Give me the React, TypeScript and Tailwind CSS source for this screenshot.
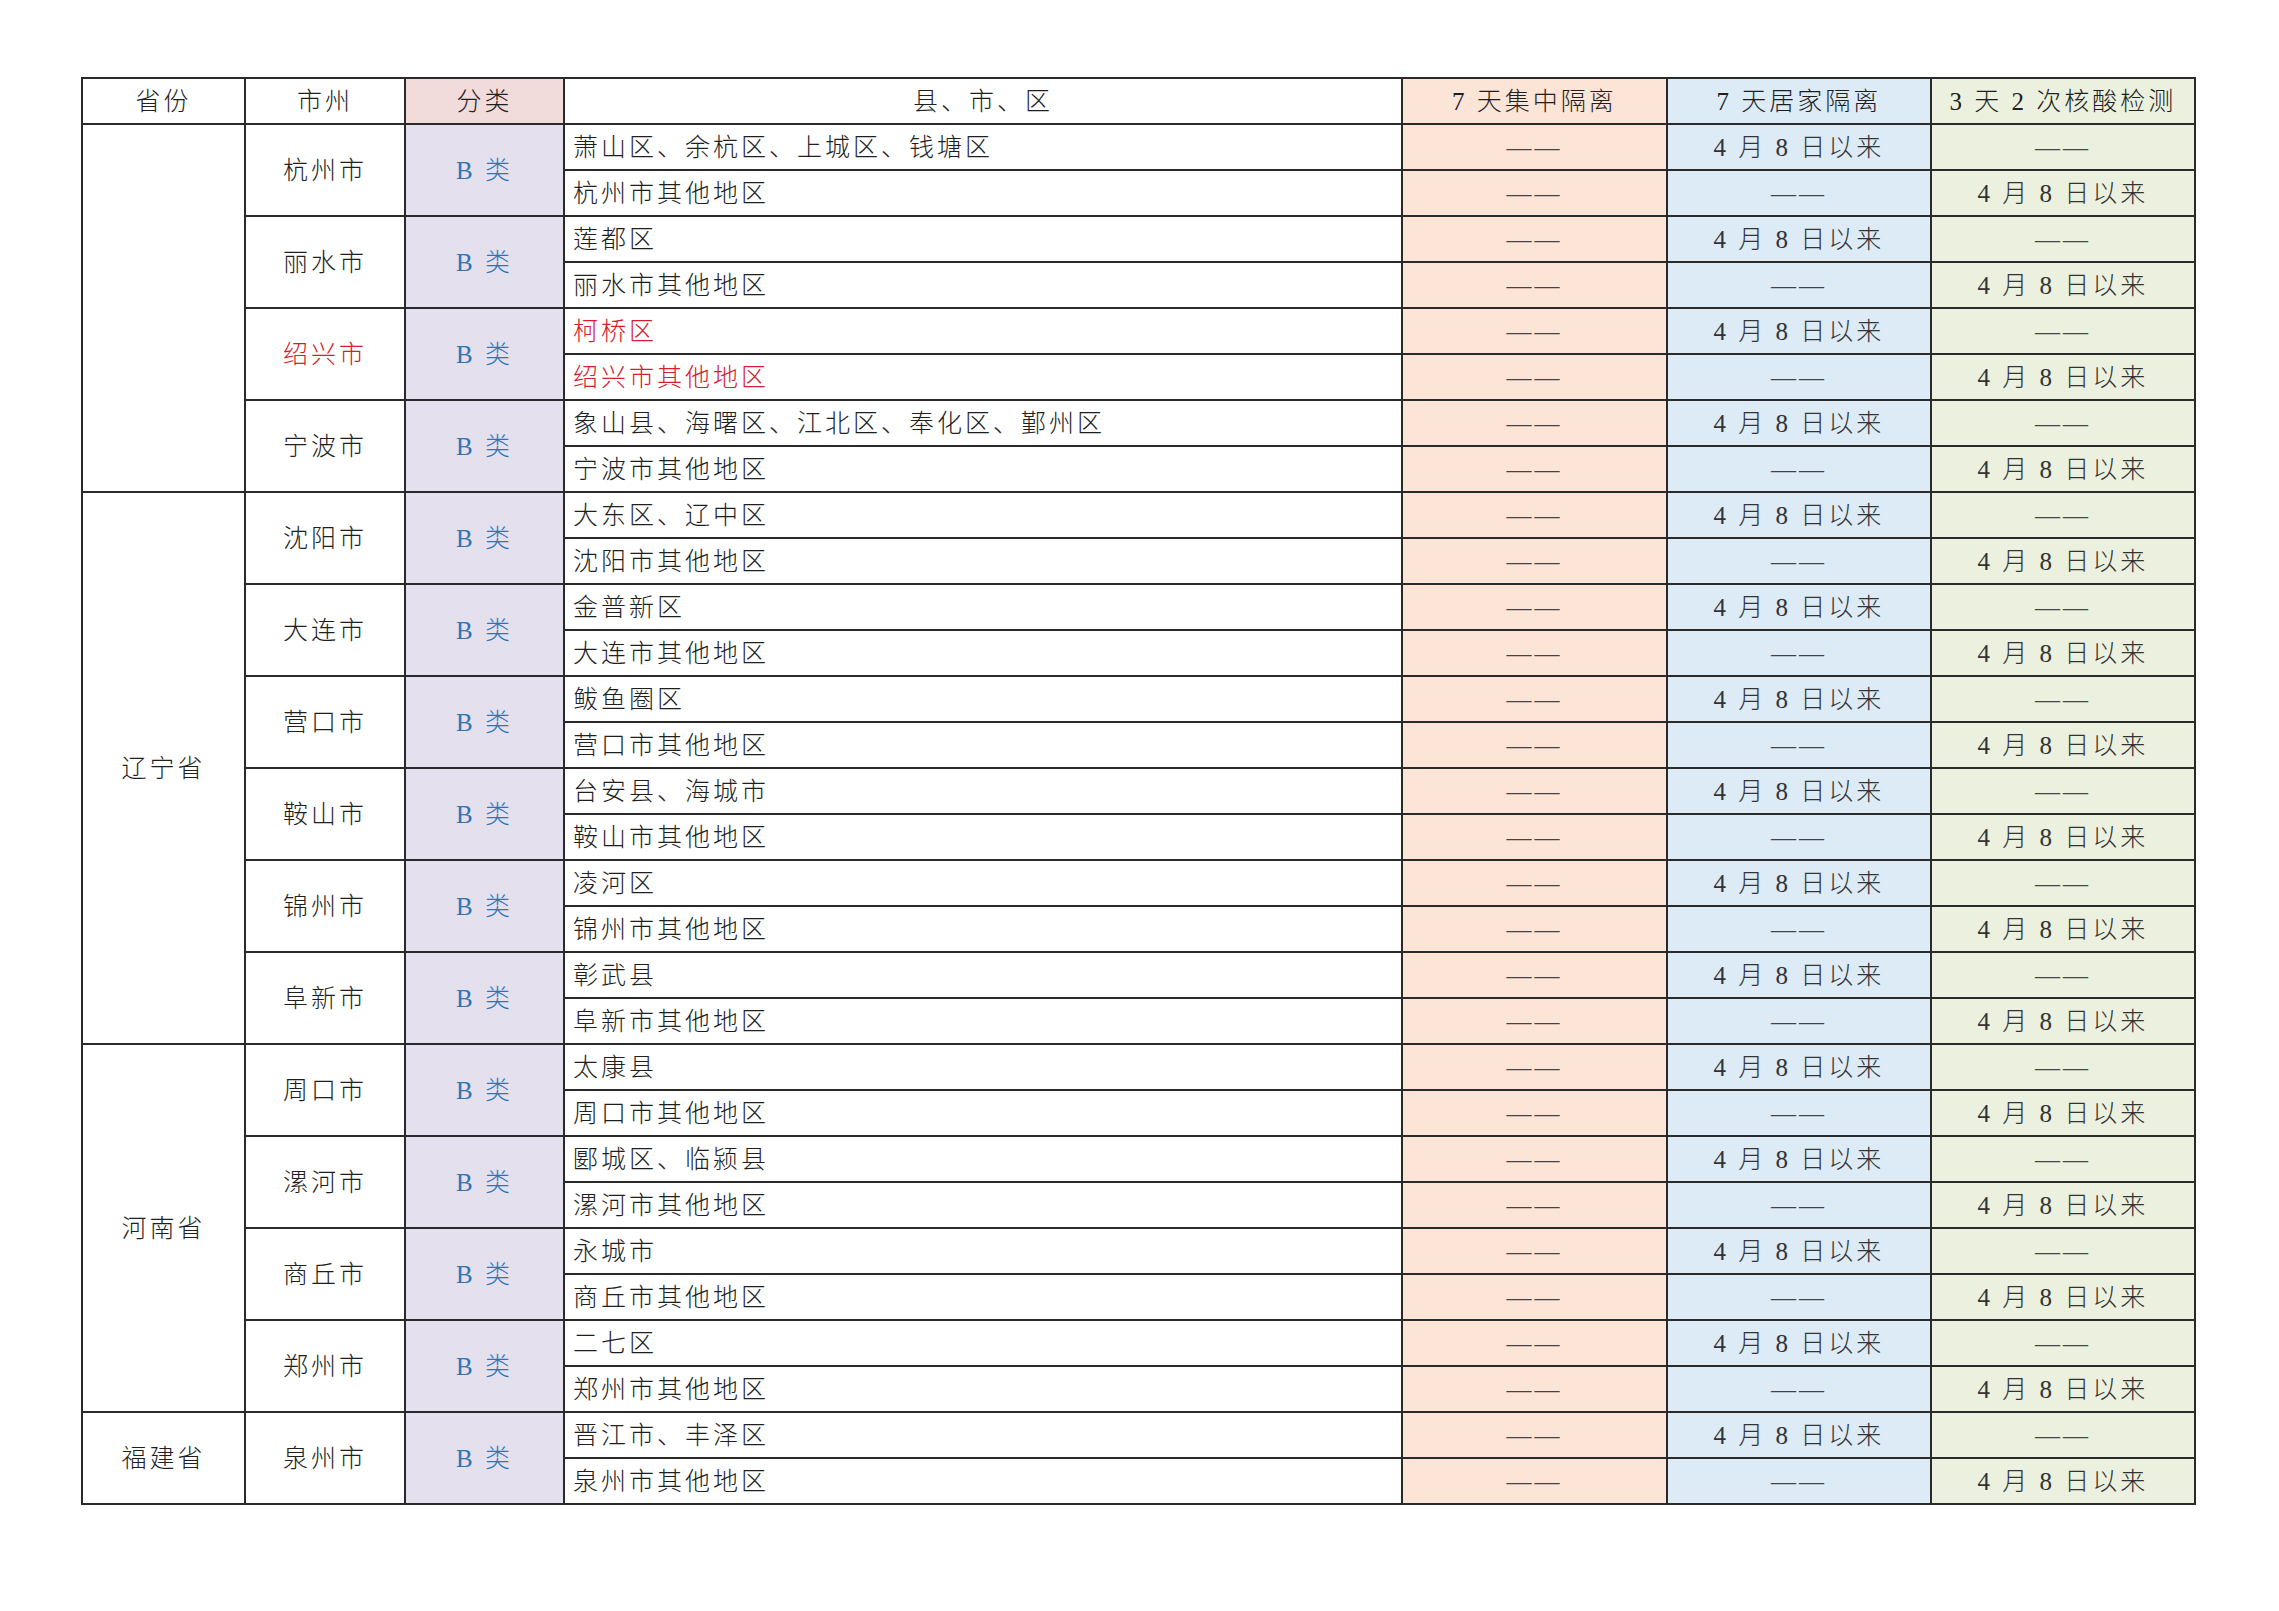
// 疫情防控分类管控区域表
// 省份 / 市州 / 分类 / 县市区 + 三类管控措施

type City = {
  name: string
  red?: boolean
  main: string
}

type Province = {
  name: string
  cities: City[]
}

const provinces: Province[] = [
  {
    name: '',
    cities: [
      { name: '杭州市', main: '萧山区、余杭区、上城区、钱塘区' },
      { name: '丽水市', main: '莲都区' },
      { name: '绍兴市', main: '柯桥区', red: true },
      { name: '宁波市', main: '象山县、海曙区、江北区、奉化区、鄞州区' },
    ],
  },
  {
    name: '辽宁省',
    cities: [
      { name: '沈阳市', main: '大东区、辽中区' },
      { name: '大连市', main: '金普新区' },
      { name: '营口市', main: '鲅鱼圈区' },
      { name: '鞍山市', main: '台安县、海城市' },
      { name: '锦州市', main: '凌河区' },
      { name: '阜新市', main: '彰武县' },
    ],
  },
  {
    name: '河南省',
    cities: [
      { name: '周口市', main: '太康县' },
      { name: '漯河市', main: '郾城区、临颍县' },
      { name: '商丘市', main: '永城市' },
      { name: '郑州市', main: '二七区' },
    ],
  },
  {
    name: '福建省',
    cities: [{ name: '泉州市', main: '晋江市、丰泽区' }],
  },
]

const cell = 'border-2 border-[#2a2a2a] text-center align-middle'
const DASH = '——'
const SINCE = '4 月 8 日以来'

export default function App() {
  return (
    <div className="min-h-[1611px] w-[2279px] bg-white pl-[81px] pt-[77px]">
      <table
        className="w-[2113px] table-fixed border-collapse text-[25px] font-light leading-none tracking-[3px] text-[#1f1f1f]"
        style={{ fontFamily: '"Liberation Serif", "Noto Sans CJK SC", serif' }}
      >
        <colgroup>
          <col className="w-[163px]" />
          <col className="w-[160px]" />
          <col className="w-[159px]" />
          <col className="w-[838px]" />
          <col className="w-[265px]" />
          <col className="w-[264px]" />
          <col className="w-[264px]" />
        </colgroup>
        <thead>
          <tr className="h-[46px]">
            <th className={`${cell} font-light`}>省份</th>
            <th className={`${cell} font-light`}>市州</th>
            <th className={`${cell} bg-[#f2dcdb] font-light`}>分类</th>
            <th className={`${cell} font-light`}>县、市、区</th>
            <th className={`${cell} bg-[#fce4d6] font-light`}>7 天集中隔离</th>
            <th className={`${cell} bg-[#ddebf7] font-light`}>7 天居家隔离</th>
            <th className={`${cell} bg-[#ebf1de] font-light`}>3 天 2 次核酸检测</th>
          </tr>
        </thead>
        <tbody>
          {provinces.map((p) =>
            p.cities.map((c, ci) => {
              const tone = c.red ? 'text-[#d4202c]' : ''
              return [
                <tr key={c.name + '-a'} className="h-[46px]">
                  {ci === 0 && (
                    <td rowSpan={p.cities.length * 2} className={cell}>
                      {p.name}
                    </td>
                  )}
                  <td rowSpan={2} className={`${cell} ${tone}`}>
                    {c.name}
                  </td>
                  <td rowSpan={2} className={`${cell} bg-[#e4e0ee] text-[#2e75b6]`}>
                    B 类
                  </td>
                  <td className={`${cell} pl-[8px] text-left ${tone}`}>{c.main}</td>
                  <td className={`${cell} bg-[#fce4d6] text-[#444]`}>{DASH}</td>
                  <td className={`${cell} bg-[#ddebf7] text-[#333]`}>{SINCE}</td>
                  <td className={`${cell} bg-[#ebf1de] text-[#444]`}>{DASH}</td>
                </tr>,
                <tr key={c.name + '-b'} className="h-[46px]">
                  <td className={`${cell} pl-[8px] text-left ${tone}`}>
                    {c.name}其他地区
                  </td>
                  <td className={`${cell} bg-[#fce4d6] text-[#444]`}>{DASH}</td>
                  <td className={`${cell} bg-[#ddebf7] text-[#444]`}>{DASH}</td>
                  <td className={`${cell} bg-[#ebf1de] text-[#333]`}>{SINCE}</td>
                </tr>,
              ]
            })
          )}
        </tbody>
      </table>
    </div>
  )
}
